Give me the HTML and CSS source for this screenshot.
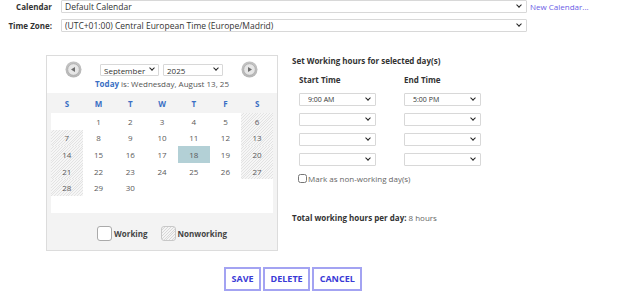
FILE: index.html
```html
<!DOCTYPE html>
<html lang="en">
<head>
    <meta charset="UTF-8">
    <title>Working Hours</title>
    <link rel="stylesheet" href="styles.css">
</head>
<body>
    <div class="top-form">
        <label class="lbl">Calendar</label>
        <div class="field">
            <span class="select wide"><select><option>Default Calendar</option></select></span>
            <a href="#" class="new-link">New Calendar...</a>
        </div>
        <label class="lbl">Time Zone:</label>
        <div class="field">
            <span class="select wide"><select><option>(UTC+01:00) Central European Time (Europe/Madrid)</option></select></span>
        </div>
    </div>

    <div class="main">
        <div class="cal">
            <div class="cal-head">
                <div class="nav">
                    <svg class="arrow" width="17" height="17" viewBox="0 0 17 17">
                        <defs>
                            <radialGradient id="ring" cx="50%" cy="40%" r="60%">
                                <stop offset="0" stop-color="#d6d6d6"/>
                                <stop offset="1" stop-color="#b4b4b4"/>
                            </radialGradient>
                        </defs>
                        <circle cx="8.5" cy="8.5" r="8" fill="url(#ring)"/>
                        <circle cx="8.5" cy="8.5" r="5.8" fill="#e6e6e6" stroke="#a9a9a9" stroke-width="0.8"/>
                        <polygon points="6,8.5 10,6 10,11" fill="#6e6e6e"/>
                    </svg>
                    <span class="select month"><select><option>September</option></select></span>
                    <span class="select year"><select><option>2025</option></select></span>
                    <svg class="arrow" width="17" height="17" viewBox="0 0 17 17">
                        <circle cx="8.5" cy="8.5" r="8" fill="url(#ring)"/>
                        <circle cx="8.5" cy="8.5" r="5.8" fill="#e6e6e6" stroke="#a9a9a9" stroke-width="0.8"/>
                        <polygon points="11,8.5 7,6 7,11" fill="#6e6e6e"/>
                    </svg>
                </div>
                <div class="today"><b>Today</b> is: Wednesday, August 13, 25</div>
            </div>
            <div class="cal-body">
                <div class="dow">
                    <span>S</span><span>M</span><span>T</span><span>W</span><span>T</span><span>F</span><span>S</span>
                </div>
                <div class="days">
                    <span></span><span>1</span><span>2</span><span>3</span><span>4</span><span>5</span><span class="off">6</span>
                    <span class="off">7</span><span>8</span><span>9</span><span>10</span><span>11</span><span>12</span><span class="off">13</span>
                    <span class="off">14</span><span>15</span><span>16</span><span>17</span><span class="sel-day">18</span><span>19</span><span class="off">20</span>
                    <span class="off">21</span><span>22</span><span>23</span><span>24</span><span>25</span><span>26</span><span class="off">27</span>
                    <span class="off">28</span><span>29</span><span>30</span><span></span><span></span><span></span><span></span>
                    <span></span><span></span><span></span><span></span><span></span><span></span><span></span>
                </div>
                <div class="legend">
                    <span class="key"><i class="box"></i>Working</span>
                    <span class="key"><i class="box hatch"></i>Nonworking</span>
                </div>
            </div>
        </div>

        <div class="hours">
            <div class="title">Set Working hours for selected day(s)</div>
            <div class="times">
                <div class="col-head">Start Time</div>
                <div class="col-head">End Time</div>
                <span class="select time"><select><option>9:00 AM</option></select></span>
                <span class="select time"><select><option>5:00 PM</option></select></span>
                <span class="select time"><select><option></option></select></span>
                <span class="select time"><select><option></option></select></span>
                <span class="select time"><select><option></option></select></span>
                <span class="select time"><select><option></option></select></span>
                <span class="select time"><select><option></option></select></span>
                <span class="select time"><select><option></option></select></span>
            </div>
            <label class="nonwork"><input type="checkbox"> Mark as non-working day(s)</label>
            <div class="total"><b>Total working hours per day:</b> 8 hours</div>
        </div>
    </div>

    <div class="actions">
        <button class="btn">SAVE</button>
        <button class="btn">DELETE</button>
        <button class="btn">CANCEL</button>
    </div>
</body>
</html>
```

FILE: styles.css
```css
body {
    margin: 0;
    font-family: 'Open Sans', 'Noto Sans', sans-serif;
    font-size: 8px;
    color: #333;
    background: #fff;
}

/* selects */
.select {
    position: relative;
    display: inline-block;
}

.select select {
    appearance: none;
    -webkit-appearance: none;
    display: block;
    width: 100%;
    height: 13px;
    margin: 0;
    padding: 0 14px 0 3px;
    font-family: inherit;
    font-size: 8.5px;
    line-height: 11px;
    color: #333;
    background: #fff;
    border: 1px solid #d8d8d8;
    border-radius: 1px;
}

.select::after {
    content: '';
    position: absolute;
    right: 6px;
    top: 3px;
    width: 3px;
    height: 3px;
    border-right: 1.5px solid #222;
    border-bottom: 1.5px solid #222;
    transform: rotate(45deg);
    pointer-events: none;
}

/* top form */
.top-form {
    display: grid;
    grid-template-columns: 52px auto;
    column-gap: 9px;
    row-gap: 6px;
    align-items: center;
}

.lbl {
    text-align: right;
    font-weight: bold;
    color: #333;
}

.field {
    display: flex;
    align-items: center;
    gap: 3px;
}

.select.wide {
    width: 466px;
}

.new-link {
    color: #6b5ce6;
    text-decoration: none;
}

/* main area */
.main {
    display: flex;
    align-items: flex-start;
    margin-top: 23px;
    padding-left: 46px;
    gap: 14px;
}

.cal {
    width: 230px;
    border: 1px solid #dcdcdc;
}

.cal-head {
    background: #fff;
    height: 37px;
}

.nav {
    display: flex;
    align-items: center;
    padding: 5px 0 0 18px;
}

.nav .arrow {
    flex: none;
}

.select.month {
    width: 59px;
    margin-left: 18px;
}

.select.year {
    width: 60px;
    margin-left: 4px;
    margin-right: 18px;
}

.nav .select select {
    height: 12px;
    padding: 0 10px 0 3px;
    font-size: 8px;
}

.nav .select::after {
    right: 5px;
    top: 2.5px;
}

.today {
    text-align: center;
    color: #555;
    line-height: 11px;
}

.today b {
    color: #3a6fc4;
}

.cal-body {
    background: #f3f3f3;
    padding: 0 4px 9px;
}

.dow {
    display: grid;
    grid-template-columns: repeat(7, 1fr);
    height: 20px;
    align-items: center;
    text-align: center;
    font-weight: bold;
    color: #3a6fc4;
}

.days {
    display: grid;
    grid-template-columns: repeat(7, 1fr);
    grid-auto-rows: 16.6px;
    background: #fff;
}

.days span {
    display: flex;
    align-items: center;
    justify-content: center;
    color: #5a5a5a;
}

.off,
.hatch {
    background: repeating-linear-gradient(135deg, #e3e3e3 0 0.7px, #f6f6f6 0.7px 2px);
}

.days .sel-day {
    background: #b3d0d6;
}

.legend {
    display: flex;
    justify-content: center;
    gap: 13px;
    margin-top: 13px;
    font-weight: bold;
    color: #444;
}

.key {
    display: flex;
    align-items: center;
    gap: 2px;
}

.box {
    display: inline-block;
    width: 13px;
    height: 13px;
    border: 1px solid #aaa;
    border-radius: 3px;
    background: #fff;
}

.box.hatch {
    border-color: #c8c8c8;
    background: repeating-linear-gradient(135deg, #d8d8d8 0 0.7px, #f4f4f4 0.7px 2px);
}

/* working hours */
.hours {
    width: 200px;
}

.title {
    font-weight: bold;
    color: #333;
    line-height: 11px;
}

.times {
    display: grid;
    grid-template-columns: 77px 77px;
    column-gap: 28px;
    row-gap: 7px;
    margin: 9px 0 0 7px;
}

.col-head {
    font-weight: bold;
    color: #333;
    line-height: 10px;
    margin-bottom: 1px;
}

.select.time select {
    padding-left: 8px;
    font-size: 7px;
}

.nonwork {
    display: flex;
    align-items: center;
    gap: 1px;
    margin: 7px 0 0 6px;
    color: #666;
}

.nonwork input {
    margin: 0;
    width: 9px;
    height: 9px;
}

.total {
    margin-top: 28px;
    color: #666;
}

.total b {
    color: #333;
}

/* buttons */
.actions {
    display: flex;
    gap: 2px;
    margin: 16px 0 0 224px;
}

.btn {
    height: 24px;
    padding: 0 5.5px;
    font-family: inherit;
    font-size: 9px;
    font-weight: bold;
    color: #3a3ad6;
    background: #fff;
    border: 2px solid #a3a3f2;
    border-radius: 0;
}
```
